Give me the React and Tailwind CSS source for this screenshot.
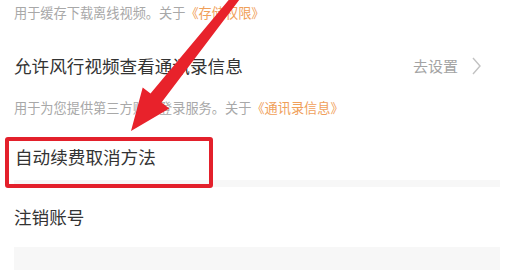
import React from 'react';

const font = { fontFamily: '"Noto Sans CJK SC", "Noto Sans", sans-serif' };

// red annotation arrow pointing at the boxed row
const Arrow = () => (
  <svg className="absolute left-0 top-0" width="513" height="270" viewBox="0 0 513 270">
    <polygon
      fill="#e8222b"
      points="234.1,-6.5 240.3,-1.5 161.5,102.4 169.3,108.6 131,131 142.7,87.4 150.5,93.6"
    />
  </svg>
);

export default function App() {
  return (
    <div
      className="relative w-[513px] h-[270px] overflow-hidden bg-white"
      style={font}
    >
      <p className="pl-[14px] pt-[4px] text-[13.2px] leading-[18px] text-[#a8a8a8]">
        用于缓存下载离线视频。关于<span className="text-[#f0a05a]">《存储权限》</span>
      </p>

      <div className="mt-[26px] flex h-[36px] items-center justify-between pl-[14px] pr-[32px]">
        <span className="text-[17.6px] text-[#333333]">允许风行视频查看通讯录信息</span>
        <div className="flex items-center gap-[14px]">
          <span className="text-[15px] text-[#a3a3a3]">去设置</span>
          <svg width="9" height="18" viewBox="0 0 9 18">
            <path d="M1 1 L8 9 L1 17" fill="none" stroke="#c2c2c2" strokeWidth="1.4" />
          </svg>
        </div>
      </div>

      <p className="mt-[15px] pl-[14px] text-[13.2px] leading-[18px] text-[#a8a8a8]">
        用于为您提供第三方账号登录服务。关于<span className="text-[#f0a05a]">《通讯录信息》</span>
      </p>

      <div className="mt-[28px] pl-[15px] text-[17.6px] leading-[24px] text-[#333333]">
        自动续费取消方法
      </div>
      <div className="ml-[14px] mt-[11px] h-[7px] w-[486px] bg-[#f7f7f7]" />

      <div className="mt-[18px] pl-[14px] text-[17.6px] leading-[24px] text-[#333333]">
        注销账号
      </div>
      <div className="ml-[14px] mt-[18px] h-[23px] w-[486px] bg-[#f7f7f7]" />

      <div className="absolute left-[5px] top-[137px] h-[51px] w-[208px] rounded-[3px] border-4 border-[#e3202b]" />
      <Arrow />
    </div>
  );
}
